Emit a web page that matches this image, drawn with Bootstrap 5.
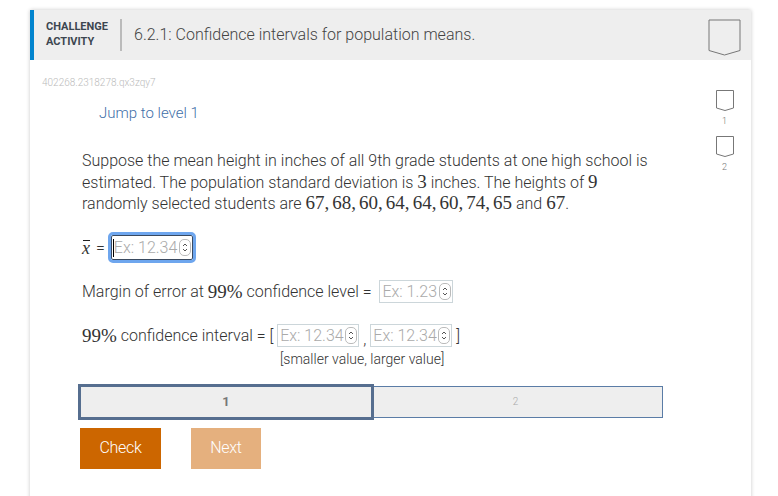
<!DOCTYPE html>
<html lang="en"><head><meta charset="utf-8"><title>Challenge activity</title>
<link href="https://cdn.jsdelivr.net/npm/bootstrap@5.3.0/dist/css/bootstrap.min.css" rel="stylesheet">
<style>
html,body{height:496px;overflow:hidden;background:#fff}
body{font-family:Roboto,sans-serif;font-weight:300;color:#333;font-size:16px;padding:10px 27px 0 30px}
.act-card{width:721px;height:520px;background:#fff;box-shadow:0 0 4px rgba(0,0,0,.22)}
.act-head{height:50px;background:#eee;border-left:4px solid #0284ce;padding-left:12px}
.act-label{font-size:11px;line-height:15px;font-weight:700;color:#3c4650;width:74px;margin-top:-2px}
.act-divider{width:2px;height:32px;background:#bbb;margin-right:12px}
.act-title{font-size:16px;color:#444;font-weight:300}
.act-chev{margin-right:10px;margin-top:5px}
.act-id{font-size:10px;line-height:11px;color:#bbb;padding:17px 0 0 12px}
.act-body{padding-left:52px}
.act-jump{font-size:15px;color:#3f6fa8;line-height:20px;padding:15px 0 0 17px}
.act-prob{width:580px;line-height:21.5px;font-size:16px;margin:27px 0 0;color:#333}
.act-m{font-family:"Liberation Serif",serif;font-weight:400;font-size:19px;color:#333;line-height:1;word-spacing:-1.7px}
.act-line{height:26px;font-size:16px;color:#333;white-space:nowrap}
.act-box{height:23px;border:1px solid #ccd6da;padding:0 1px 0 2px;font-size:16px;display:inline-flex;align-items:center;background:#fff}
.act-box input{border:0;padding:0;outline:0;font:inherit;color:#333;background:transparent;min-width:0}
.act-box input::placeholder{color:#aaa;opacity:1}
.act-in1{width:64px}.act-in2{width:56px}
.act-focus{height:25px;outline:3px solid #6ea6ee;border:1px solid #3a4a60;border-radius:2px;padding-left:1px;margin-left:6px}
.act-caret{width:1px;height:18px;background:#000}
.act-spin{margin-left:1px;flex:none}
.act-hint{font-size:14px;line-height:16px;color:#333;padding-left:198px;margin-top:2px}
.act-levels{width:585px;height:32px;margin:19px 0 0 -4px}
.act-lv{background:#eee;font-size:10px;color:#aaa;border:1px solid #5a7ca6}
.act-lv1{width:296px;height:36px;margin-top:-2px;border:3px solid #566e8f;font-size:13px;font-weight:700;color:#777}
.act-lv2{flex:1;border-left:0;height:32px;padding-right:5px}
.act-acts{margin:10px 0 0 -2px}
.act-btn{border-radius:0;border:0;color:#fff;font-size:16px;font-weight:300;height:41px;padding:0;letter-spacing:-.3px}
.act-check{width:81px;background:#cc6600}
.act-next{width:70px;background:#e5b07e;margin-left:30px}
.act-check:hover{background:#cc6600;color:#fff}.act-next:hover{background:#e5b07e;color:#fff}
.act-side{width:22px;margin-right:14px;padding-top:30px;font-size:9px;color:#777;text-align:center;line-height:11px}
.act-bar{position:relative;display:inline-block;font-style:italic;font-size:18px}
.act-bar::before{content:"";position:absolute;left:1px;right:0;top:1px;border-top:1px solid #222}
.act-eq{margin-left:6px}
</style></head><body>
<div class="act-card">
 <div class="act-head d-flex align-items-center">
  <div class="act-label">CHALLENGE<br>ACTIVITY</div>
  <div class="act-divider"></div>
  <div class="act-title flex-grow-1">6.2.1: Confidence intervals for population means.</div>
  <svg class="act-chev" width="33" height="37" viewBox="0 0 33 37"><path d="M1 1H32V31.5L16.5 36 1 31.5Z" fill="#eee" stroke="#777"/></svg>
 </div>
 <div class="d-flex">
  <div class="flex-grow-1">
   <div class="act-id">402268.2318278.qx3zqy7</div>
   <div class="act-body">
    <div class="act-jump">Jump to level 1</div>
    <p class="act-prob">Suppose the mean height in inches of all 9th grade students at one high school is estimated. The population standard deviation is <span class="act-m">3</span> inches. The heights of <span class="act-m">9</span> randomly selected students are <span class="act-m">67, 68, 60, 64, 64, 60, 74, 65</span> and <span class="act-m">67</span>.</p>
    <div class="act-line d-flex align-items-center" style="margin-top:20px"><span class="act-m act-bar">x</span><span class="act-eq">=</span>
     <span class="act-box act-focus"><span class="act-caret"></span><input class="act-in1" placeholder="Ex: 12.34" aria-label="x bar"><svg class="act-spin" width="12" height="17" viewBox="0 0 12 17"><rect x=".5" y=".5" width="11" height="16" rx="4.5" fill="#fff" stroke="#bbb"/><path d="M4 7l2-2 2 2M4 10l2 2 2-2" fill="none" stroke="#555"/></svg></span></div>
    <div class="act-line d-flex align-items-center" style="margin-top:18px"><span>Margin of error at&nbsp;</span><span class="act-m">99%</span><span>&nbsp;confidence level =&nbsp;</span>
     <span class="act-box ms-1"><input class="act-in2" placeholder="Ex: 1.23" aria-label="margin"><svg class="act-spin" width="12" height="17" viewBox="0 0 12 17"><rect x=".5" y=".5" width="11" height="16" rx="4.5" fill="#fff" stroke="#bbb"/><path d="M4 7l2-2 2 2M4 10l2 2 2-2" fill="none" stroke="#555"/></svg></span></div>
    <div class="act-line d-flex align-items-center" style="margin-top:18px"><span class="act-m">99%</span><span>&nbsp;confidence interval = [&nbsp;</span>
     <span class="act-box"><input class="act-in1" placeholder="Ex: 12.34" aria-label="lower"><svg class="act-spin" width="12" height="17" viewBox="0 0 12 17"><rect x=".5" y=".5" width="11" height="16" rx="4.5" fill="#fff" stroke="#bbb"/><path d="M4 7l2-2 2 2M4 10l2 2 2-2" fill="none" stroke="#555"/></svg></span><span class="mx-1 mt-2">,</span>
     <span class="act-box"><input class="act-in1" placeholder="Ex: 12.34" aria-label="upper"><svg class="act-spin" width="12" height="17" viewBox="0 0 12 17"><rect x=".5" y=".5" width="11" height="16" rx="4.5" fill="#fff" stroke="#bbb"/><path d="M4 7l2-2 2 2M4 10l2 2 2-2" fill="none" stroke="#555"/></svg></span><span>&nbsp;]</span></div>
    <div class="act-hint">[smaller value, larger value]</div>
    <div class="act-levels d-flex"><div class="act-lv act-lv1 d-flex align-items-center justify-content-center">1</div><div class="act-lv act-lv2 d-flex align-items-center justify-content-center">2</div></div>
    <div class="act-acts d-flex"><button class="btn act-btn act-check">Check</button><button class="btn act-btn act-next">Next</button></div>
   </div>
  </div>
  <div class="act-side">
   <svg width="19" height="21" viewBox="0 0 19 21" class="d-block ms-0"><path d="M1.5.5H18.5V18L10 20.5 1.5 18Z" fill="#fff" stroke="#777"/></svg>
   <div style="margin:5px 3px 9px 0">1</div>
   <svg width="19" height="21" viewBox="0 0 19 21" class="d-block ms-0"><path d="M1.5.5H18.5V18L10 20.5 1.5 18Z" fill="#fff" stroke="#777"/></svg>
   <div style="margin:5px 3px 0 0">2</div>
  </div>
 </div>
</div>
<script src="https://cdn.jsdelivr.net/npm/bootstrap@5.3.0/dist/js/bootstrap.bundle.min.js"></script>
</body></html>
